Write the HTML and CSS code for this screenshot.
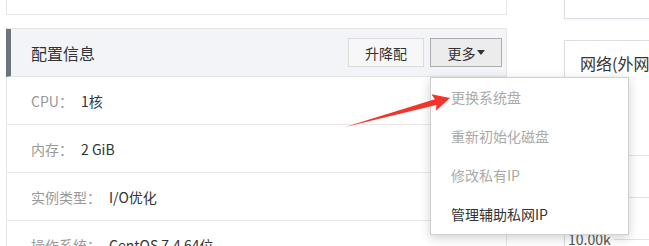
FILE: index.html
```html
<!DOCTYPE html>
<html lang="zh-CN">
<head>
  <meta charset="UTF-8" />
  <meta name="viewport" content="width=device-width, initial-scale=1.0"/>
  <title>实例详情</title>
  <link rel="stylesheet" href="styles.css">
</head>
<body>
  <div class="page">
    <div class="col-left">
      <div class="panel panel-cut"></div>

      <div class="panel config">
        <div class="panel-head">
          <span class="panel-title">配置信息</span>
          <div class="actions">
            <button class="btn btn-resize">升降配</button>
            <div class="more">
              <button class="btn btn-active">更多<i class="caret"></i></button>
              <ul class="menu">
                <li class="disabled">更换系统盘</li>
                <li class="disabled">重新初始化磁盘</li>
                <li class="disabled">修改私有IP</li>
                <li>管理辅助私网IP</li>
              </ul>
            </div>
          </div>
        </div>
        <div class="row"><span class="label">CPU：</span><span class="value">1核</span></div>
        <div class="row"><span class="label">内存：</span><span class="value">2 GiB</span></div>
        <div class="row"><span class="label">实例类型：</span><span class="value">I/O优化</span></div>
        <div class="row"><span class="label">操作系统：</span><span class="value">CentOS 7.4 64位</span></div>
      </div>
    </div>

    <div class="col-right">
      <div class="panel panel-cut card"></div>
      <div class="panel card net">
        <div class="net-head">网络(外网)</div>
        <div class="chart">
          <div class="grid-row"><span class="axis">30.00k</span><span class="grid-line"></span></div>
          <div class="grid-row"><span class="axis">20.00k</span><span class="grid-line"></span></div>
          <div class="grid-row"><span class="axis">10.00k</span><span class="grid-line"></span></div>
        </div>
      </div>
    </div>
  </div>

  <!-- 标注箭头 -->
  <svg class="mark" width="649" height="246" viewBox="0 0 649 246">
    <polygon transform="translate(345 127) rotate(-15.4)"
      points="0,0 94,-3 92,-8.5 109,0 92,8.5 94,3" fill="#f2352b"/>
  </svg>
</body>
</html>
```

FILE: styles.css
```css
body {
  margin: 0;
  background: #ffffff;
  font-family: "Noto Sans CJK SC", "Noto Sans", sans-serif;
  color: #333333;
  overflow: hidden;
}

.page {
  display: flex;
  padding-left: 6px;
  height: 246px;
  overflow: hidden;
}

.col-left {
  width: 501px;
  flex-shrink: 0;
}

.col-right {
  width: 320px;
  flex-shrink: 0;
  margin-left: 57px;
}

.panel {
  border: 1px solid #e6e6e6;
  background: #ffffff;
}

.panel-cut {
  height: 14px;
  border-top: none;
}

.config {
  margin-top: 13px;
}

.panel-head {
  display: flex;
  align-items: center;
  justify-content: space-between;
  height: 47px;
  margin-left: -1px;
  padding: 0 4px 0 20px;
  background: #f3f4f8;
  border-left: 5px solid #6c747e;
  border-bottom: 1px solid #e3e4e8;
}

.panel-title {
  font-size: 16px;
  line-height: 20px;
}

.actions {
  display: flex;
  gap: 6px;
}

.btn {
  font-family: inherit;
  font-size: 14px;
  line-height: 18px;
  height: 29px;
  padding: 0;
  color: #333333;
  background: #f7f7f7;
  border: 1px solid #dddddd;
  border-radius: 0;
  display: flex;
  align-items: center;
  justify-content: center;
}

.btn-resize {
  width: 76px;
}

.btn-active {
  width: 72px;
  background: #ececec;
  border-color: #adadad;
}

.caret {
  display: inline-block;
  margin-left: 1px;
  border-left: 4.5px solid transparent;
  border-right: 4.5px solid transparent;
  border-top: 5px solid #333333;
}

.more {
  position: relative;
}

.menu {
  position: absolute;
  top: 39px;
  left: 0;
  width: 197px;
  margin: 0;
  padding: 0;
  list-style: none;
  background: #ffffff;
  border: 1px solid #d0d0d0;
  box-shadow: 0 3px 10px rgba(0, 0, 0, 0.18);
  z-index: 5;
}

.menu li {
  height: 39px;
  line-height: 39px;
  padding-left: 20px;
  font-size: 14px;
  color: #333333;
}

.menu li.disabled {
  color: #aaaaaa;
}

.row {
  display: flex;
  align-items: center;
  height: 47px;
  padding-left: 24px;
  border-bottom: 1px solid #e8e8e8;
  font-size: 14px;
}

.label {
  color: #999999;
}

.value {
  margin-left: 8px;
  color: #333333;
}

.card {
  border-color: #dadde3;
  box-shadow: 0 1px 2px rgba(0, 0, 0, 0.06);
}

.col-right .panel-cut {
  height: 18px;
}

.net {
  margin-top: 21px;
  height: 240px;
}

.net-head {
  height: 44px;
  display: flex;
  align-items: center;
  padding-left: 15px;
  font-size: 16px;
  white-space: nowrap;
}

.chart {
  padding-top: 49px;
}

.grid-row {
  display: flex;
  align-items: center;
  height: 42px;
}

.axis {
  width: 46px;
  padding-left: 3px;
  font-size: 14px;
  color: #555555;
}

.grid-line {
  flex: 1;
  border-top: 1px solid #e3e3e3;
}

.mark {
  position: absolute;
  top: 0;
  left: 0;
  pointer-events: none;
  z-index: 10;
}
```
